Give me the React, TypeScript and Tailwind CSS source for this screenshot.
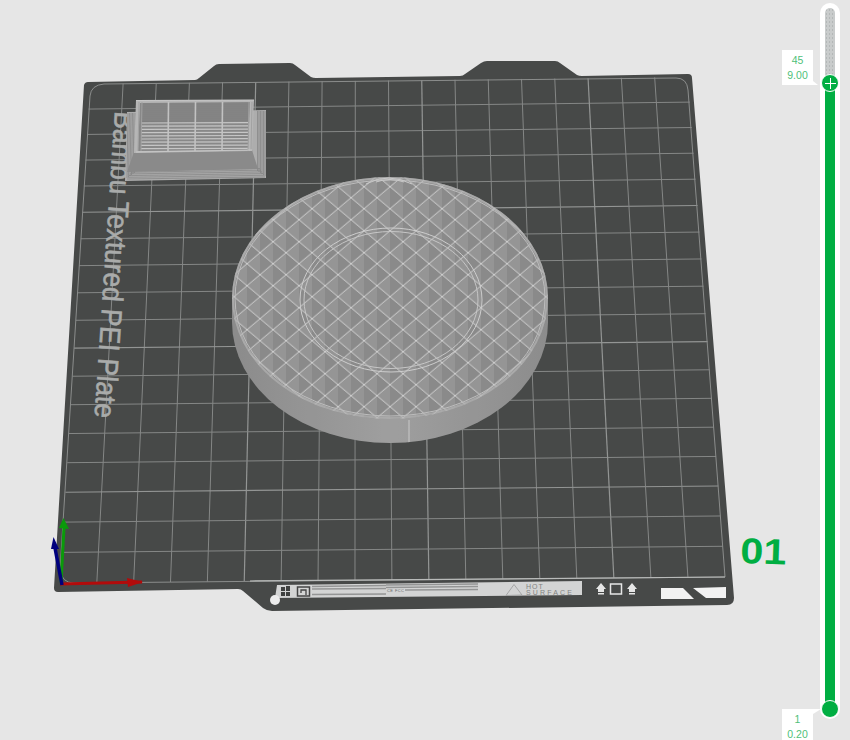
import React from "react";

type P = [number, number];

// Square-to-quad homography for the bed grid
const Q: [P, P, P, P] = [[90, 84], [688, 77], [725, 577], [60, 583]];
function makeH() {
  const [[x0, y0], [x1, y1], [x2, y2], [x3, y3]] = Q;
  const dx1 = x1 - x2, dx2 = x3 - x2, sx = x0 - x1 + x2 - x3;
  const dy1 = y1 - y2, dy2 = y3 - y2, sy = y0 - y1 + y2 - y3;
  const d = dx1 * dy2 - dx2 * dy1;
  const g = (sx * dy2 - dx2 * sy) / d;
  const h = (dx1 * sy - sx * dy1) / d;
  const a = x1 - x0 + g * x1, b = x3 - x0 + h * x3, c = x0;
  const e = y1 - y0 + g * y1, f = y3 - y0 + h * y3, i = y0;
  return (u: number, v: number): P => {
    const w = g * u + h * v + 1;
    return [(a * u + b * v + c) / w, (e * u + f * v + i) / w];
  };
}
const H = makeH();
const N = 18;
const idx = Array.from({ length: N - 1 }, (_, i) => i + 1);

function GridLines() {
  return (
    <g>
      {idx.map((i) => {
        const strong = i % 5 === 0;
        const a = H(i / N, 0), b = H(i / N, 1), c = H(0, i / N), d = H(1, i / N);
        const stroke = strong ? "#939594" : "#858786";
        const w = strong ? 1.2 : 1;
        return (
          <g key={i} stroke={stroke} strokeWidth={w}>
            <line x1={a[0]} y1={a[1]} x2={b[0]} y2={b[1]} />
            <line x1={c[0]} y1={c[1]} x2={d[0]} y2={d[1]} />
          </g>
        );
      })}
      <path
        d="M90 96 Q91 85 104 84 L676 78 Q687 78 688 90 L725 577 L74 583 Q62 583 60 570 Z"
        fill="none"
        stroke="#8b8d8c"
        strokeWidth="1"
      />
      <line x1="250" y1="581" x2="725" y2="577" stroke="#b9bbba" strokeWidth="1.2" />
    </g>
  );
}

function Disc() {
  const sideStripes = Array.from({ length: 160 }, (_, i) => 232 + i * 2);
  return (
    <g>
      <path d="M232 298 L232 322 A158 121 0 0 0 548 322 L548 298 Z" fill="url(#sideGrad)" />
      <g clipPath="url(#sideClip)">
        {sideStripes.map((x) => (
          <line key={x} x1={x} y1="298" x2={x} y2="446" stroke="#6f6f6f" strokeOpacity="0.2" strokeWidth="1" />
        ))}
        <line x1="409" y1="420" x2="409" y2="445" stroke="#c9c9c9" strokeWidth="1" />
      </g>
      <ellipse cx="390" cy="298" rx="158" ry="121" fill="url(#diamonds)" />
      <ellipse cx="390" cy="298" rx="157" ry="120" fill="none" stroke="#b4b4b4" strokeWidth="2" strokeOpacity="0.7" />
      <ellipse cx="390" cy="298" rx="155" ry="118" fill="none" stroke="#bdbdbd" strokeWidth="1" />
      <ellipse cx="391" cy="300" rx="91" ry="72" fill="none" stroke="#cdcdcd" strokeWidth="1" />
      <ellipse cx="391" cy="300" rx="87" ry="68.5" fill="none" stroke="#c6c6c6" strokeWidth="1" />
      <g fill="none" stroke="#c9c9c9" strokeWidth="1">
        <path d="M366 184 Q388 172 412 184" />
        <path d="M376 182 Q390 177 404 182" />
      </g>
    </g>
  );
}

function Box() {
  const rows = Array.from({ length: 9 }, (_, i) => 123 + i * 3.2);
  const base = Array.from({ length: 6 }, (_, i) => i);
  const hatch = Array.from({ length: 9 }, (_, i) => 104 + i * 2);
  return (
    <g>
      <polygon points="127,112 266,110 266,178 125,181" fill="#adadad" />
      {base.map((i) => (
        <g key={i} stroke="#808080" strokeOpacity="0.65" strokeWidth="1">
          <line x1={128 + i * 1.5} y1="113" x2={127 + i * 1.5} y2={178 - i} />
          <line x1={265 - i * 1.5} y1="111" x2={265 - i * 1.5} y2={176 - i} />
          <line x1={127 + i} y1={179 - i * 1.7} x2={265 - i} y2={177 - i * 1.7} />
        </g>
      ))}
      <polygon points="134,152 252,150 258,169 127,172" fill="#8a8a8a" />
      <polygon points="136,100 254,100 252,151 134,153" fill="#b6b6b6" />
      <polygon points="140,103 250,102 248,150 138,151" fill="#888888" />
      <polygon points="142,103 249,103 248,121 141,122" fill="#7e7e7e" />
      {hatch.map((y) => (
        <line key={y} x1="142" y1={y} x2="249" y2={y} stroke="#8e8e8e" strokeWidth="0.8" />
      ))}
      {rows.map((y) => (
        <line key={y} x1="141" y1={y} x2="248" y2={y - 0.3} stroke="#c6c6c6" strokeWidth="1.2" />
      ))}
      {[168, 195, 222].map((x) => (
        <line key={x} x1={x + 0.5} y1="102" x2={x} y2="151" stroke="#c2c2c2" strokeWidth="1.6" />
      ))}
      {[138, 141, 248, 251].map((x) => (
        <line key={x} x1={x + 1} y1="102" x2={x} y2="151" stroke="#a2a2a2" strokeWidth="1" />
      ))}
      <line x1="136" y1="152" x2="252" y2="150" stroke="#c6c6c6" strokeWidth="1.2" />
      <line x1="136" y1="100.5" x2="254" y2="100" stroke="#c6c6c6" strokeWidth="1.2" />
    </g>
  );
}

function Axes() {
  return (
    <g>
      <path d="M60 584 L142 582" stroke="#b20b0b" strokeWidth="3" />
      <polygon points="127,578 143,582 128,587" fill="#b20b0b" />
      <path d="M61 582 L64 528" stroke="#0a9a0a" strokeWidth="3" />
      <polygon points="59,528 63.5,518 69,529" fill="#0a9a0a" />
      <path d="M62 585 L55 548" stroke="#00007d" strokeWidth="3.5" />
      <polygon points="51,549 53.5,537 59,549" fill="#00007d" />
    </g>
  );
}

function UpArrow({ x }: { x: number }) {
  return (
    <g fill="#e6e6e6">
      <polygon points={`${x},589 ${x + 5},583 ${x + 10},589 ${x + 8},589 ${x + 8},592 ${x + 2},592 ${x + 2},589`} />
      <rect x={x + 2} y="593" width="6" height="1.5" />
    </g>
  );
}

function Sticker() {
  const labels = {
    fontFamily: "'Liberation Sans', sans-serif",
  };
  return (
    <g>
      <polygon points="277,585 582,581 582,595 275,598" fill="#d3d4d4" />
      <circle cx="275" cy="600" r="5" fill="#ececec" />
      <g fill="#3f4140">
        <rect x="281" y="587" width="4" height="4" />
        <rect x="286" y="586" width="4" height="5" />
        <rect x="281" y="592" width="4" height="4" />
        <rect x="286" y="592" width="4" height="4" />
      </g>
      <rect x="297.5" y="587" width="12" height="9" fill="none" stroke="#444" strokeWidth="1.5" />
      <path d="M301 593 V590 H306 V595" fill="none" stroke="#444" strokeWidth="1.3" />
      <g stroke="#949595" strokeWidth="1.5">
        <line x1="312" y1="586.5" x2="386" y2="585.5" />
        <line x1="312" y1="589" x2="386" y2="588.5" />
        <line x1="312" y1="594.5" x2="386" y2="594" />
        <line x1="386" y1="585" x2="478" y2="584" />
        <line x1="386" y1="587.5" x2="478" y2="586.5" />
        <line x1="405" y1="590" x2="478" y2="589.5" />
      </g>
      <text x="387" y="592" fontSize="4" fill="#666" style={labels} textLength="17">CE FCC</text>
      <polygon points="514,584.5 522,595 506,595.5" fill="none" stroke="#a5a6a6" strokeWidth="1" />
      <text x="526" y="589" fontSize="7" fill="#828383" letterSpacing="1" style={labels}>HOT</text>
      <text x="526" y="595" fontSize="7" fill="#828383" textLength="46" style={labels}>SURFACE</text>
      <UpArrow x={596} />
      <rect x="610.5" y="584" width="11" height="10" fill="none" stroke="#e6e6e6" strokeWidth="1.5" />
      <UpArrow x={627} />
      <polygon points="661,588 683,588 694,599 661,599" fill="#f2f2f2" />
      <polygon points="693,588 726,587 726,598 706,598" fill="#f2f2f2" />
    </g>
  );
}

function Scene() {
  return (
    <svg className="absolute left-0 top-0 w-[850px] h-[740px]" viewBox="0 0 850 740">
      <defs>
        <pattern
          id="diamonds"
          width="26"
          height="22"
          patternUnits="userSpaceOnUse"
          patternTransform="translate(390 296.7)"
        >
          <rect width="26" height="22" fill="#8f8f8f" />
          <polygon points="0,0 13,0 13,11" fill="#959595" />
          <polygon points="13,0 26,0 13,11" fill="#8a8a8a" />
          <polygon points="13,11 13,22 0,22" fill="#959595" />
          <polygon points="13,11 26,22 13,22" fill="#8a8a8a" />
          <polygon points="0,0 13,11 0,22" fill="#8a8a8a" />
          <polygon points="26,0 26,22 13,11" fill="#959595" />
          <path d="M0 0 L26 22 M26 0 L0 22" stroke="#d0d0d0" strokeWidth="1" />
        </pattern>
        <linearGradient id="sideGrad" x1="0" x2="1" y1="0" y2="0">
          <stop offset="0" stopColor="#8f8f8f" />
          <stop offset="0.5" stopColor="#a4a4a4" />
          <stop offset="1" stopColor="#909090" />
        </linearGradient>
        <clipPath id="sideClip">
          <path d="M232 298 L232 322 A158 121 0 0 0 548 322 L548 298 Z" />
        </clipPath>
      </defs>

      <path
        d="M84 85 Q85 82 88 82 L195 80 Q197 80 199 78 L214 66 Q216 64 219 64 L290 63 Q293 63 295 65 L311 77 Q313 78 316 78 L460 76 Q463 76 465 74 L481 63 Q484 61 487 61 L555 61 Q558 61 560 63 L577 75 Q579 76 582 76 L688 74 Q692 74 692 78 L734 598 Q734 605 727 605 L272 611 Q267 611 263 608 L243 591 Q241 589 238 589 L58 592 Q54 592 54 588 Z"
        fill="#474948"
      />
      <GridLines />
      <text
        transform="translate(115 111) rotate(93.8)"
        fontSize="29"
        fill="#a9abaa"
        stroke="#a9abaa"
        strokeWidth="0.6"
        textLength="307"
        lengthAdjust="spacingAndGlyphs"
        style={{ fontFamily: "'Liberation Sans', sans-serif" }}
      >
        Bambu Textured PEI Plate
      </text>
      <Box />
      <Disc />
      <Axes />
      <Sticker />
      <text
        transform="translate(740 563) rotate(2)"
        fontSize="36"
        fontWeight="700"
        fill="#00ae42"
        textLength="46"
        lengthAdjust="spacingAndGlyphs"
        style={{ fontFamily: "'Liberation Sans', sans-serif" }}
      >
        01
      </text>
    </svg>
  );
}

function LayerLabel({ top, lines, tail }: { top: string; lines: string[]; tail: "top" | "bottom" }) {
  return (
    <div
      className={`absolute right-[37px] ${top} flex w-[31px] flex-col items-center gap-[3px] bg-white py-[4px] text-[10.5px] leading-[12px] text-[#4fbf7a]`}
    >
      {lines.map((l) => (
        <span key={l}>{l}</span>
      ))}
      {tail === "bottom" ? (
        <div className="absolute bottom-0 right-[-5px] h-0 w-0 border-b-[4px] border-r-[5px] border-b-white border-r-transparent" />
      ) : (
        <div className="absolute top-0 right-[-8px] h-0 w-0 border-t-[5px] border-r-[8px] border-t-white border-r-transparent" />
      )}
    </div>
  );
}

function Slider() {
  return (
    <div className="relative ml-auto h-[740px] w-[68px] font-['Liberation_Sans',sans-serif]">
      <div className="absolute right-[10px] top-[3px] flex h-[716px] w-[20px] flex-col rounded-full bg-white p-[5px]">
        <div className="h-[72px] w-full rounded-t-full bg-[#c9cccc] bg-[radial-gradient(#b4b8b8_0.7px,transparent_0.8px)] bg-[length:3px_4px]" />
        <div className="flex-1 bg-[#00ae42]" />
      </div>
      <div className="absolute right-[11px] top-[74px] flex h-[18px] w-[18px] items-center justify-center rounded-full border border-white bg-[#00ae42]">
        <div className="relative h-[11px] w-[11px]">
          <div className="absolute left-0 top-[5px] h-px w-[11px] bg-white" />
          <div className="absolute left-[5px] top-0 h-[11px] w-px bg-white" />
        </div>
      </div>
      <div className="absolute right-[11px] top-[700px] h-[18px] w-[18px] rounded-full border border-white bg-[#00ae42]" />
      <LayerLabel top="top-[50px]" lines={["45", "9.00"]} tail="bottom" />
      <LayerLabel top="top-[709px]" lines={["1", "0.20"]} tail="top" />
    </div>
  );
}

export default function App() {
  return (
    <div className="relative flex h-[740px] w-[850px] overflow-hidden bg-[#e6e6e6]">
      <Scene />
      <Slider />
    </div>
  );
}
